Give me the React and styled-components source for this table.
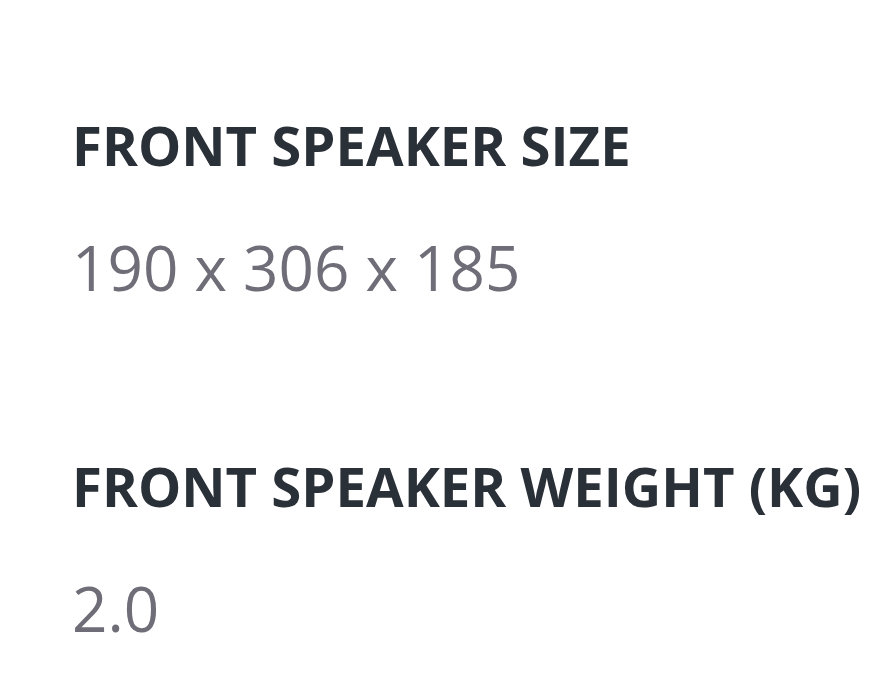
import React from 'react';
import styled, { createGlobalStyle } from 'styled-components';

const GlobalStyle = createGlobalStyle`
  body {
    margin: 0;
    background: #ffffff;
    font-family: 'Open Sans', 'Noto Sans', sans-serif;
  }
`;

const Page = styled.main`
  display: flex;
  flex-direction: column;
  gap: 144px;
  padding: 110px 0 0 72px;
`;

const Spec = styled.section`
  display: flex;
  flex-direction: column;
  gap: 47px;
`;

const Label = styled.h3`
  margin: 0;
  font-size: 54.5px;
  line-height: 70px;
  font-weight: 700;
  color: #2a3038;
`;

const Value = styled.p`
  margin: 0;
  font-size: 62px;
  line-height: 80px;
  font-weight: 400;
  color: #6f6e78;
`;

const specs = [
  { label: 'FRONT SPEAKER SIZE', value: '190 x 306 x 185' },
  { label: 'FRONT SPEAKER WEIGHT (KG)', value: '2.0' },
];

function App() {
  return (
    <>
      <GlobalStyle />
      <Page>
        {specs.map((s) => (
          <Spec key={s.label}>
            <Label>{s.label}</Label>
            <Value>{s.value}</Value>
          </Spec>
        ))}
      </Page>
    </>
  );
}

export default App;
